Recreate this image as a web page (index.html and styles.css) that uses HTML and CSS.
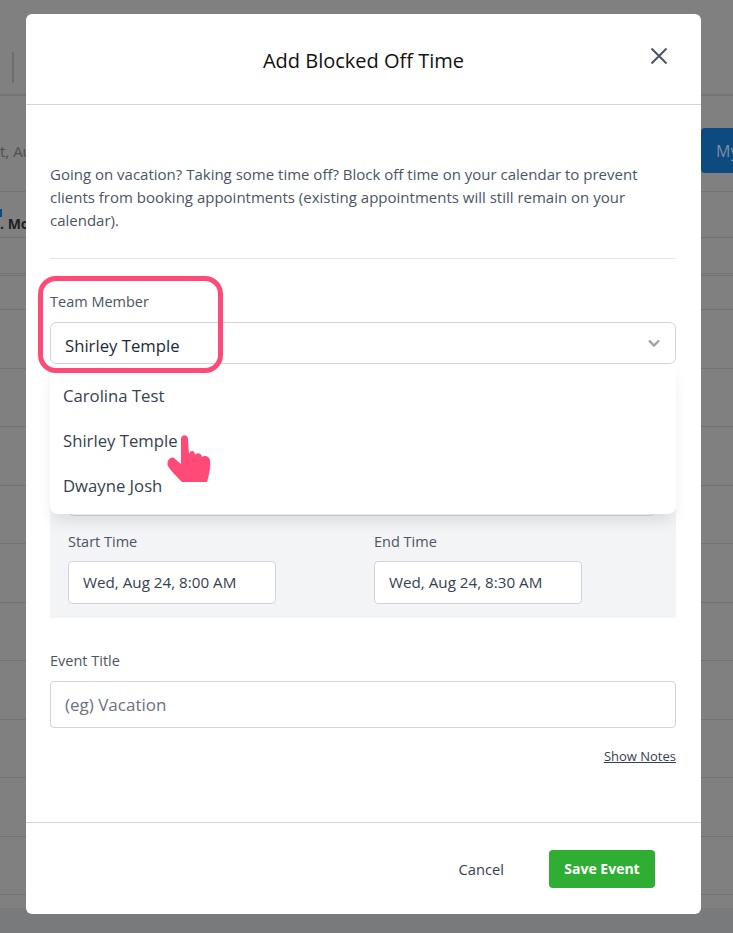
FILE: index.html
```html
<!DOCTYPE html>
<html lang="en">
<head>
    <meta charset="UTF-8">
    <meta name="viewport" content="width=device-width, initial-scale=1.0">
    <title>Add Blocked Off Time</title>
    <link rel="stylesheet" href="styles.css">
</head>
<body>
    <!-- calendar page dimmed behind the modal -->
    <div class="page">
        <div class="page-header"><span class="header-divider"></span></div>
        <div class="page-toolbar">
            <span class="toolbar-date">t, Au</span>
            <span class="toolbar-btn">My</span>
        </div>
        <div class="day-row"><span class="day-mark"></span><span class="day-name">. Mo</span></div>
        <div class="slot slot-short"></div>
        <div class="slot slot-double"></div>
        <div class="slot"></div>
        <div class="slot"></div>
        <div class="slot"></div>
        <div class="slot"></div>
        <div class="slot"></div>
        <div class="slot"></div>
        <div class="slot"></div>
        <div class="slot"></div>
        <div class="slot"></div>
        <div class="slot"></div>
        <div class="page-bottom"></div>
    </div>

    <div class="modal">
        <div class="modal-header">
            <h1>Add Blocked Off Time</h1>
            <svg class="close-icon" width="18" height="18" viewBox="0 0 18 18" fill="none" stroke="#4b5563" stroke-width="2">
                <path d="M1.5 1.5 L16.5 16.5 M16.5 1.5 L1.5 16.5"/>
            </svg>
        </div>

        <div class="modal-body">
            <p class="intro">Going on vacation? Taking some time off? Block off time on your calendar to prevent clients from booking appointments (existing appointments will still remain on your calendar).</p>

            <div class="field team-field">
                <label>Team Member</label>
                <div class="select-box">
                    <span class="select-value">Shirley Temple</span>
                    <svg width="14" height="14" viewBox="0 0 14 14" fill="none" stroke="#9ca3af" stroke-width="2.4">
                        <path d="M2 4.5 L7 9.5 L12 4.5"/>
                    </svg>
                </div>
                <div class="select-menu">
                    <div class="select-option">Carolina Test</div>
                    <div class="select-option">Shirley Temple</div>
                    <div class="select-option">Dwayne Josh</div>
                </div>
                <div class="highlight-ring"></div>
                <svg class="hand-cursor" width="44" height="47" viewBox="0 0 44 47" fill="#ff4a78">
                    <path d="M14 4 C14 -1 21 -1 21 4 L22 19 C23 15 28 15 28 20 C29 18 34 17 35 22 C37 20 43 21 43 26 C44 32 42 40 40 47 L15 47 C10 42 4 36 1 31 C-1 27 3 21 7 23 L14 29 Z"/>
                </svg>
            </div>

            <div class="time-panel">
                <div class="date-input"></div>
                <div class="time-row">
                    <div class="time-field">
                        <label>Start Time</label>
                        <div class="time-input">Wed, Aug 24, 8:00 AM</div>
                    </div>
                    <div class="time-field">
                        <label>End Time</label>
                        <div class="time-input">Wed, Aug 24, 8:30 AM</div>
                    </div>
                </div>
            </div>

            <div class="field title-field">
                <label>Event Title</label>
                <div class="text-input">(eg) Vacation</div>
            </div>

            <div class="notes-row"><a href="#">Show Notes</a></div>
        </div>

        <div class="modal-footer">
            <a href="#" class="cancel">Cancel</a>
            <a href="#" class="save-btn">Save Event</a>
        </div>
    </div>
</body>
</html>
```

FILE: styles.css
```css
:root {
    --text: #4b5563;
    --dark: #111111;
    --line: #d2d3de;
    --pink: #ff4a78;
}

* {
    margin: 0;
    padding: 0;
    box-sizing: border-box;
}

html, body {
    height: 100%;
    overflow: hidden;
}

body {
    background: #808080;
    font-family: 'Open Sans', 'Noto Sans', sans-serif;
    position: relative;
}

/* Page behind the modal */
.page {
    height: 933px;
}

.page-header {
    height: 96px;
    border-bottom: 2px solid #757575;
    padding: 52px 0 0 12px;
}

.header-divider {
    display: block;
    width: 2px;
    height: 31px;
    background: #6e6e6e;
}

.page-toolbar {
    height: 96px;
    border-bottom: 1px solid #737373;
    display: flex;
    justify-content: space-between;
    padding-top: 32px;
    color: #4f4f4f;
    font-size: 15px;
}

.toolbar-date {
    margin-top: 13px;
}

.toolbar-btn {
    width: 32px;
    height: 45px;
    padding: 12px 0 0 15px;
    background: #0c4a80;
    color: #7b8ea3;
    border-radius: 4px 0 0 4px;
    font-size: 16px;
    white-space: nowrap;
    overflow: hidden;
}

.day-row {
    height: 46px;
    border-bottom: 1px solid #737373;
    font-size: 14px;
    font-weight: 700;
    color: #222;
    padding: 22px 0 0 0;
    position: relative;
}

.day-mark {
    position: absolute;
    left: 0;
    top: 17px;
    width: 2px;
    height: 8px;
    background: #0c4a80;
}

.slot {
    height: 58.5px;
    border-bottom: 1px solid #737373;
}

.slot-short {
    height: 38px;
    border-bottom: 3px double #737373;
}

.slot-double {
    height: 34px;
}

.page-bottom {
    height: 30px;
    margin-top: 13px;
    background: #797a7c;
}

/* Modal */
.modal {
    position: absolute;
    top: 14px;
    left: 26px;
    width: 675px;
    height: 900px;
    background: #fff;
    border-radius: 6px;
    display: flex;
    flex-direction: column;
}

.modal-header {
    height: 91px;
    border-bottom: 1px solid var(--line);
    display: flex;
    justify-content: center;
    align-items: center;
    position: relative;
}

.modal-header h1 {
    font-size: 20px;
    font-weight: 500;
    color: var(--dark);
    padding-top: 3px;
}

.close-icon {
    position: absolute;
    right: 33px;
    top: 33px;
}

.modal-body {
    flex: 1;
    padding: 58px 25px 0 24px;
}

.intro {
    font-size: 15px;
    line-height: 23px;
    color: var(--text);
    padding-bottom: 26px;
    border-bottom: 1px solid #e5e7eb;
}

.field label, .time-field label {
    display: block;
    font-size: 14.5px;
    line-height: 20px;
    color: var(--text);
}

.team-field {
    position: relative;
    margin-top: 33px;
    z-index: 1;
}

.select-box {
    height: 42px;
    margin-top: 10px;
    border: 1px solid var(--line);
    border-radius: 6px;
    padding: 0 14px;
    display: flex;
    justify-content: space-between;
    align-items: center;
    font-size: 16.7px;
    color: #1f2937;
}

.select-value {
    padding-top: 4px;
}

.select-menu {
    position: absolute;
    top: 73px;
    left: 0;
    right: 0;
    height: 149px;
    padding: 18px 0 0 13px;
    background: #fff;
    border-radius: 0 0 8px 8px;
    box-shadow: 0 10px 15px -3px rgba(0, 0, 0, 0.1);
}

.select-option {
    height: 45px;
    line-height: 26px;
    font-size: 16.7px;
    color: #374151;
}

.highlight-ring {
    position: absolute;
    top: -16px;
    left: -12px;
    width: 185px;
    height: 97px;
    border: 5px solid var(--pink);
    border-radius: 18px;
}

.hand-cursor {
    position: absolute;
    top: 143px;
    left: 117px;
}

/* top sits under the open menu */
.time-panel {
    margin-top: 135px;
    height: 119px;
    background: #f3f4f6;
    padding: 0 18px;
}

.date-input {
    height: 17px;
    margin-right: 2px;
    background: #fff;
    border: 1px solid var(--line);
    border-radius: 0 0 6px 6px;
}

.time-row {
    display: flex;
    margin-top: 16px;
}

.time-field {
    flex: none;
    width: 306px;
}

.time-input {
    width: 208px;
    height: 43px;
    margin-top: 9px;
    padding-left: 14px;
    background: #fff;
    border: 1px solid var(--line);
    border-radius: 4px;
    font-size: 15.2px;
    line-height: 41px;
    color: #374151;
}

.title-field {
    margin-top: 33px;
}

.text-input {
    height: 47px;
    margin-top: 10px;
    padding-left: 14px;
    border: 1px solid var(--line);
    border-radius: 4px;
    font-size: 17px;
    line-height: 45px;
    color: #6b7280;
}

.notes-row {
    margin-top: 20px;
    text-align: right;
    font-size: 13px;
    line-height: 16px;
}

.notes-row a {
    color: #374151;
}

.modal-footer {
    height: 92px;
    border-top: 1px solid var(--line);
    display: flex;
    justify-content: flex-end;
    align-items: center;
    padding: 0 46px 0 0;
    font-size: 14.7px;
}

.cancel {
    color: #374151;
    text-decoration: none;
    margin-right: 45px;
}

.save-btn {
    width: 106px;
    height: 38px;
    line-height: 38px;
    text-align: center;
    background: #2fae33;
    color: #fff;
    font-weight: 700;
    font-size: 14px;
    text-decoration: none;
    border-radius: 4px;
}
```
